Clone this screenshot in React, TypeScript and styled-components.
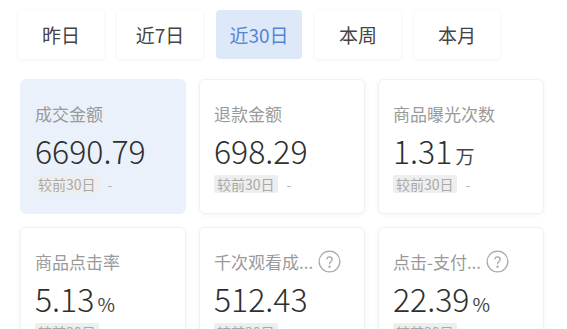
import React from 'react'
import styled, { createGlobalStyle } from 'styled-components'

const GlobalStyle = createGlobalStyle`
  html, body {
    margin: 0;
    padding: 0;
    background: #ffffff;
    overflow: hidden;
  }
  body {
    font-family: 'Noto Sans CJK SC', 'Noto Sans', sans-serif;
  }
`

const Page = styled.div`
  width: 567px;
  height: 329px;
  overflow: hidden;
  background: #ffffff;
`

const TabBar = styled.div`
  display: flex;
  gap: 13px;
  padding: 10px 0 0 18px;
`

const Tab = styled.div<{ active?: boolean }>`
  width: 86px;
  height: 49px;
  display: flex;
  align-items: center;
  justify-content: center;
  border-radius: 4px;
  font-size: 19px;
  color: ${({ active }) => (active ? '#5486d6' : '#444444')};
  background: ${({ active }) => (active ? '#dde8f8' : '#ffffff')};
  box-shadow: ${({ active }) =>
    active ? 'none' : '0 1px 4px rgba(0, 0, 0, 0.06)'};
`

const Grid = styled.div`
  display: grid;
  grid-template-columns: repeat(3, 166px);
  gap: 13px;
  padding: 20px 0 0 20px;
`

const Card = styled.div<{ highlight?: boolean }>`
  height: 135px;
  box-sizing: border-box;
  padding: 20px 0 0 14px;
  border-radius: 6px;
  background: ${({ highlight }) => (highlight ? '#eaf1fb' : '#ffffff')};
  border: 1px solid ${({ highlight }) => (highlight ? '#eaf1fb' : '#f1f1f1')};
  box-shadow: ${({ highlight }) =>
    highlight ? 'none' : '0 1px 5px rgba(0, 0, 0, 0.05)'};
`

const Title = styled.div`
  display: flex;
  align-items: center;
  gap: 5px;
  height: 26px;
  font-size: 17px;
  color: #9a9a9a;
  white-space: nowrap;
`

const Value = styled.div`
  margin-top: 4px;
  height: 40px;
  display: flex;
  align-items: baseline;
  font-size: 32px;
  font-weight: 300;
  line-height: 40px;
  color: #2f2f2f;
`

const Unit = styled.span`
  margin-left: 3px;
  font-size: 19px;
  font-weight: 400;
  color: #444444;
`

const Compare = styled.div`
  margin-top: 4px;
  display: flex;
  align-items: center;
  gap: 9px;
  font-size: 14px;
  color: #b5b5b5;
`

const Tag = styled.span`
  padding: 0 3px;
  height: 18px;
  line-height: 18px;
  background: #eeeeee;
  color: #a9a9a9;
  border-radius: 2px;
`

const HelpIcon = () => (
  <svg width="23" height="23" viewBox="0 0 24 24" fill="none" stroke="#a8a8a8" strokeWidth="1.3" strokeLinecap="round">
    <circle cx="12" cy="12" r="10.8" />
    <path d="M9.2 9.3a2.8 2.8 0 0 1 5.5 0.8c0 1.9-2.7 2.3-2.7 4.3" />
    <circle cx="12" cy="17.4" r="0.6" fill="#a8a8a8" />
  </svg>
)

interface Metric {
  title: string
  value: string
  unit?: string
  help?: boolean
  highlight?: boolean
}

const tabs = ['昨日', '近7日', '近30日', '本周', '本月']

const metrics: Metric[] = [
  { title: '成交金额', value: '6690.79', highlight: true },
  { title: '退款金额', value: '698.29' },
  { title: '商品曝光次数', value: '1.31', unit: '万' },
  { title: '商品点击率', value: '5.13', unit: '%' },
  { title: '千次观看成...', value: '512.43', help: true },
  { title: '点击-支付...', value: '22.39', unit: '%', help: true },
]

const App = () => (
  <Page>
    <GlobalStyle />
    <TabBar>
      {tabs.map((t) => (
        <Tab key={t} active={t === '近30日'}>
          {t}
        </Tab>
      ))}
    </TabBar>
    <Grid>
      {metrics.map((m) => (
        <Card key={m.title} highlight={m.highlight}>
          <Title>
            {m.title}
            {m.help && <HelpIcon />}
          </Title>
          <Value>
            {m.value}
            {m.unit && <Unit>{m.unit}</Unit>}
          </Value>
          <Compare>
            <Tag>较前30日</Tag>-
          </Compare>
        </Card>
      ))}
    </Grid>
  </Page>
)

export default App
